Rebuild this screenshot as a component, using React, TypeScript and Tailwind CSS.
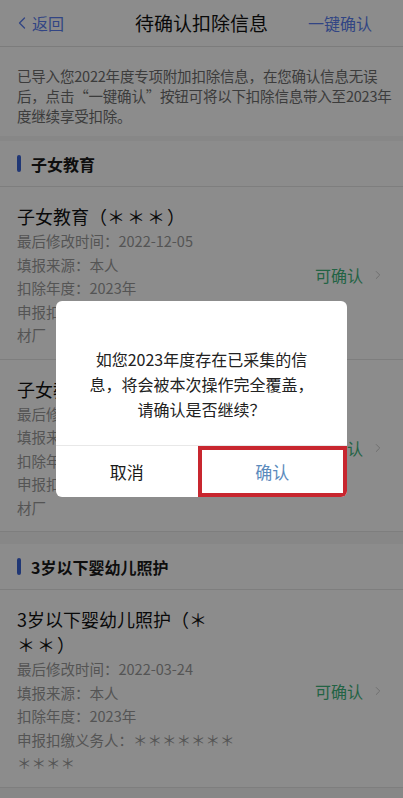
import { ChevronLeft, ChevronRight } from "lucide-react";

type Item = {
  name: string;
  stars: string;
  time: string;
  year: string;
  agent: string;
};

function SectionHeader({ label }: { label: string }) {
  return (
    <div className="flex h-[46px] items-center gap-[10px] border-b border-[#e6e6e6] bg-white pl-[17px]">
      <span className="h-[17px] w-[4px] rounded-full bg-[#3b64d6]" />
      <span className="text-[16px] font-bold text-[#1a1a1a]">{label}</span>
    </div>
  );
}

function Card({ item }: { item: Item }) {
  return (
    <div className="flex items-center border-b border-[#e6e6e6] bg-white pb-[12px] pl-[17px] pr-[18px] pt-[17px]">
      <div className="w-[220px]">
        <div className="w-[205px] text-[18px] leading-[25px] text-[#111]">
          {item.name}（<span className="tracking-[2px]">{item.stars}</span>）
        </div>
        <div className="text-[14.5px] leading-[23.5px] text-[#9a9a9a]">
          <div>最后修改时间：{item.time}</div>
          <div>填报来源：本人</div>
          <div>扣除年度：{item.year}</div>
          <div>申报扣缴义务人：{item.agent}</div>
        </div>
      </div>
      <div className="ml-auto flex items-center gap-[8px]">
        <span className="text-[16px] text-[#3fb57c]">可确认</span>
        <ChevronRight className="h-[14px] w-[14px] text-[#c4c4c4]" strokeWidth={1.5} />
      </div>
    </div>
  );
}

export default function App() {
  const kids: Item[] = [
    { name: "子女教育", stars: "＊＊＊", time: "2022-12-05", year: "2023年", agent: "＊＊＊＊＊＊＊材厂" },
    { name: "子女教育", stars: "＊＊＊", time: "2022-12-05", year: "2023年", agent: "＊＊＊＊＊＊＊材厂" },
  ];
  const baby: Item = {
    name: "3岁以下婴幼儿照护",
    stars: "＊＊＊",
    time: "2022-03-24",
    year: "2023年",
    agent: "＊＊＊＊＊＊＊＊＊＊＊",
  };

  return (
    <div className="relative h-[798px] w-[403px] overflow-hidden bg-[#f6f6f6] font-['Noto_Sans_CJK_SC',sans-serif]">
      <header className="grid h-[47px] grid-cols-[1fr_auto_1fr] items-center border-b border-[#e2e2e2] bg-white">
        <div className="flex items-center pl-[12px] text-[16px] text-[#5b7ff0]">
          <ChevronLeft className="h-[20px] w-[20px]" strokeWidth={1.6} />
          <span>返回</span>
        </div>
        <h1 className="text-[19px] text-[#111]">待确认扣除信息</h1>
        <div className="pr-[31px] text-right text-[16px] text-[#5b7ff0]">一键确认</div>
      </header>

      <div className="whitespace-nowrap bg-white px-[17px] pb-[10px] pt-[19px] text-[14.5px] leading-[20px] tracking-[-0.2px] text-[#6e6e6e]">
        <div>已导入您2022年度专项附加扣除信息，在您确认信息无误</div>
        <div>后，点击“一键确认”按钮可将以下扣除信息带入至2023年</div>
        <div>度继续享受扣除。</div>
      </div>

      <div className="h-[5px]" />
      <SectionHeader label="子女教育" />
      {kids.map((k, i) => (
        <Card key={i} item={k} />
      ))}

      <div className="h-[12px]" />
      <SectionHeader label="3岁以下婴幼儿照护" />
      <Card item={baby} />

      <div className="absolute inset-0 flex items-center justify-center bg-black/[0.45]">
        <div className="w-[291px] overflow-hidden rounded-[6px] bg-white">
          <div className="pb-[23px] pt-[46px] text-center text-[16px] leading-[25px] text-[#222]">
            如您2023年度存在已采集的信
            <br />
            息，将会被本次操作完全覆盖，
            <br />
            请确认是否继续？
          </div>
          <div className="flex h-[52px] border-t border-[#e8e8e8]">
            <button className="flex-1 text-[17px] text-[#1a1a1a]">取消</button>
            <button className="flex-1 border-[4px] border-[#c8262f] text-[17px] text-[#5c8bbd]">
              确认
            </button>
          </div>
        </div>
      </div>
    </div>
  );
}
